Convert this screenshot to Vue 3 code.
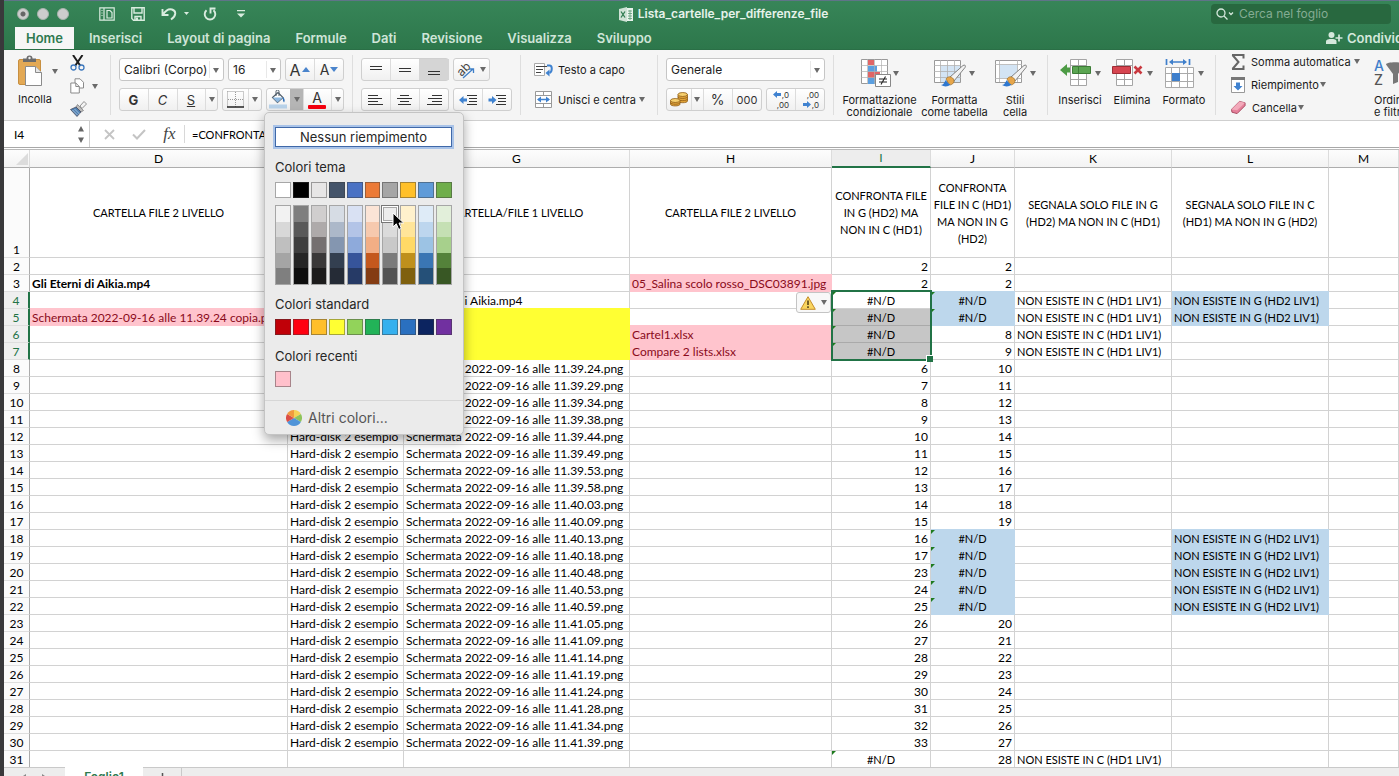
<script setup>
import { ref } from 'vue'

const tabs = ['Home', 'Inserisci', 'Layout di pagina', 'Formule', 'Dati', 'Revisione', 'Visualizza', 'Sviluppo']
const fontName = ref('Calibri (Corpo)')
const fontSize = ref('16')
const numberFormat = ref('Generale')
const cellName = ref('I4')
const formula = ref('=CONFRONTA')
const search = ref('')

const columns = ['D', 'F', 'G', 'H', 'I', 'J', 'K', 'L', 'M']
const headings = {
  D: 'CARTELLA FILE 2 LIVELLO',
  G: 'CARTELLA/FILE 1 LIVELLO',
  H: 'CARTELLA FILE 2 LIVELLO',
  I: 'CONFRONTA FILE\nIN G (HD2) MA\nNON IN C (HD1)',
  J: 'CONFRONTA\nFILE IN C (HD1)\nMA NON IN G\n(HD2)',
  K: 'SEGNALA SOLO FILE IN G\n(HD2) MA NON IN C (HD1)',
  L: 'SEGNALA SOLO FILE IN C\n(HD1) MA NON IN G (HD2)'
}
const times = [
  '39.24', '39.29', '39.34', '39.38', '39.44', '39.49', '39.53', '39.58', '40.03', '40.09', '40.13', '40.18',
  '40.48', '40.53', '40.59', '41.05', '41.09', '41.14', '41.19', '41.24', '41.28', '41.34', '41.39'
]
const inI = [2, 2, '', '', '', '', 6, 7, 8, 9, 10, 11, 12, 13, 14, 15, 16, 17, 23, 24, 25, 26, 27, 28, 29, 30, 31, 32, 33, '']
const inJ = [2, 2, '', '', 8, 9, 10, 11, 12, 13, 14, 15, 16, 17, 18, 19, '', '', '', '', '', 20, 21, 22, 23, 24, 25, 26, 27, 28]

const rows = inI.map((vi, i) => {
  const n = i + 2
  const vj = inJ[i]
  const cells = {}
  for (const c of columns) cells[c] = { text: '', cls: '' }
  cells.I = vi === '' ? { text: '#N/D', cls: 'mid err caps' } : { text: vi, cls: 'num' }
  cells.J = vj === '' ? { text: '#N/D', cls: 'mid err caps blue' } : { text: vj, cls: 'num' }
  if (vi === '') cells.K = { text: 'NON ESISTE IN C (HD1 LIV1)', cls: 'caps' }
  if (vj === '') cells.L = { text: 'NON ESISTE IN G (HD2 LIV1)', cls: 'caps blue' }
  if (n >= 8 && n <= 30) {
    cells.F = { text: 'Hard-disk 2 esempio', cls: '' }
    cells.G = { text: `Schermata 2022-09-16 alle 11.${times[n - 8]}.png`, cls: '' }
  }
  if (n >= 5 && n <= 7) {
    cells.G = { text: '', cls: 'yellow' }
    cells.I.cls += ' picked'
  }
  return { n, cells }
})
const at = n => rows[n - 2].cells
at(3).D = { text: 'Gli Eterni di Aikia.mp4', cls: 'bold' }
at(5).D = { text: 'Schermata 2022-09-16 alle 11.39.24 copia.png', cls: 'pink' }
at(3).H = { text: '05_Salina scolo rosso_DSC03891.jpg', cls: 'pink' }
at(4).G = { text: 'Gli Eterni di Aikia.mp4', cls: '' }
at(6).H = { text: 'Cartel1.xlsx', cls: 'pink' }
at(7).H = { text: 'Compare 2 lists.xlsx', cls: 'pink' }

const theme = ['#ffffff', '#000000', '#e7e6e6', '#44546a', '#4a72c4', '#ec7a36', '#a5a5a5', '#ffc02a', '#5f9bd8', '#6fae4b']
const shades = [
  ['#f2f2f2', '#d8d8d8', '#bfbfbf', '#a5a5a5', '#7f7f7f'],
  ['#7f7f7f', '#595959', '#3f3f3f', '#262626', '#0e0e0e'],
  ['#d0cece', '#aeaaaa', '#757070', '#3a3838', '#1c1b1b'],
  ['#d6dce4', '#acb8c9', '#8496b0', '#333f50', '#252b36'],
  ['#d9e1f3', '#b3c4e7', '#8eaadb', '#36549a', '#263a66'],
  ['#fbe4d6', '#f6c9ae', '#f2ae85', '#c4581d', '#843c13'],
  ['#ededed', '#dbdbdb', '#c9c9c9', '#7b7b7b', '#525252'],
  ['#fff1cc', '#ffe599', '#ffd966', '#bf901c', '#7f600e'],
  ['#deebf7', '#bdd6ee', '#9cc3e4', '#3a76b4', '#255078'],
  ['#e2efda', '#c5e0b4', '#a7d08c', '#54823a', '#385724']
]
const standard = ['#c00008', '#ff0010', '#ffbf2a', '#ffff33', '#92d35a', '#22b358', '#35b0ee', '#2a70c0', '#0c2460', '#7130a0']
</script>

<template>
  <div class="screen">
    <div class="window">
      <header class="top">
        <div class="titlebar">
          <div class="lights">
            <button class="light on" aria-label="Chiudi"></button>
            <button class="light" aria-label="Riduci"></button>
            <button class="light" aria-label="Ingrandisci"></button>
          </div>
          <div class="quick">
            <button aria-label="Nuovo">
              <svg width="16" height="14" viewBox="0 0 16 14"><path d="M.8.8h14.4v12.4H.8zM5 1v12M8 3.500h3l2 2V11H8zM2.500 3.500h1M2.500 6h1M2.500 8.500h1" fill="none" stroke="#d9ecdf" stroke-width="1.200" /></svg>
            </button>
            <button aria-label="Salva">
              <svg width="14" height="14" viewBox="0 0 14 14"><path d="M.8.8h12.4v12.4H2.500L.8 11.500zM3 1v5h8V1M4 13V9.500h6V13" fill="none" stroke="#d9ecdf" stroke-width="1.400" /><path d="M5 10.500h2v3H5z" fill="#d9ecdf" /></svg>
            </button>
            <button aria-label="Annulla" class="undo">
              <svg width="28" height="14" viewBox="0 0 28 14"><path d="M1.500 2v6h6M2 7.500C5 3 8 1.500 11 2.500c4.500 1.500 4.500 6-1 10" fill="none" stroke="#d9ecdf" stroke-width="1.900" /><path d="M23 5h5l-2.500 3z" fill="#d9ecdf" /></svg>
            </button>
            <button aria-label="Ripeti">
              <svg width="14" height="14" viewBox="0 0 14 14"><path d="M3.500 3.200A5.300 5.300 0 1 0 10.500 3.200M7.500 6.500V1.500H12.500" fill="none" stroke="#d9ecdf" stroke-width="1.900" /></svg>
            </button>
            <button aria-label="Personalizza" class="more">
              <svg width="10" height="8" viewBox="0 0 10 8"><path d="M1 0h8v1.300H1zM1 3.500h8L5 7.500z" fill="#d9ecdf" /></svg>
            </button>
          </div>
          <h1 class="doc">
            <svg width="15" height="15" viewBox="0 0 15 15"><path d="M6 1h8v13H6z" fill="#e8f3ec" /><path d="M9 4h4M9 6.500h4M9 9h4M9 11.500h4M11 3v10" stroke="#5a9a76" stroke-width=".8" /><path d="M0 2l8-2v15l-8-2z" fill="#cfe2d6" /><path d="M2 4.500l4 6M6 4.500l-4 6" stroke="#2e7a50" stroke-width="1.300" /></svg>
            Lista_cartelle_per_differenze_file
          </h1>
          <label class="search">
            <svg width="18" height="12" viewBox="0 0 18 12"><circle cx="5" cy="5" r="4" fill="none" stroke="#d5e8dc" stroke-width="1.300" /><path d="M8 8l3.500 3.500M13 4.500l2 2 2-2" fill="none" stroke="#d5e8dc" stroke-width="1.300" /></svg>
            <input v-model="search" type="text" placeholder="Cerca nel foglio" aria-label="Cerca nel foglio" />
          </label>
        </div>
        <nav class="tabs">
          <a v-for="(t, i) in tabs" :key="t" href="#" :class="{ active: i === 0 }">{{ t }}</a>
          <button class="share">
            <svg width="17" height="12" viewBox="0 0 17 12"><circle cx="5.500" cy="3" r="3" fill="#d5e8dc" /><path d="M0 12V9.500C0 7.500 3 7 5.500 7S10.500 7.500 10.500 9.500V12z" fill="#d5e8dc" /><path d="M13 2.500v7M9.500 6h7" stroke="#d5e8dc" stroke-width="1.700" /></svg>
            Condividi
          </button>
        </nav>
      </header>

      <section class="ribbon">
        <div class="group clip">
          <button class="tall paste">
            <span class="pic">
              <svg width="26" height="32" viewBox="0 0 26 32"><rect x="0.500" y="4.500" width="22" height="25" rx="1.500" fill="#e3a955" stroke="#c78f40" /><path d="M5 7V3.500h3.500a3 3 0 0 1 6 0H18V7z" fill="#6b6b6b" /><circle cx="11.500" cy="3" r="1.200" fill="#eee" /><path d="M7.500 11.500h10l6 6v13h-16z" fill="#fff" stroke="#8b8b8b" /><path d="M17.500 11.500v6h6" fill="#e7e7e7" stroke="#8b8b8b" /></svg>
              <i class="arr"></i>
            </span>
            Incolla
          </button>
          <div class="stack">
            <button aria-label="Taglia">
              <svg width="16" height="16" viewBox="0 0 16 16"><path d="M3 0l7.500 11M12.500 0L5 11" stroke="#1d1d1d" stroke-width="2" /><circle cx="3.500" cy="12.500" r="2.500" fill="none" stroke="#3d78bd" stroke-width="1.300" /><circle cx="11.500" cy="12.500" r="2.500" fill="none" stroke="#3d78bd" stroke-width="1.300" /></svg>
            </button>
            <button aria-label="Copia">
              <svg width="16" height="16" viewBox="0 0 16 16"><path d="M5 .8h5l3.500 3.500V10H5z" fill="#fff" stroke="#8a8a8a" /><path d="M.8 5h5L9.300 8.500V15H.8zM5.800 5v3.500h3.500" fill="#fff" stroke="#8a8a8a" /></svg>
              <i class="arr"></i>
            </button>
            <button aria-label="Copia formato">
              <svg width="17" height="16" viewBox="0 0 17 16"><path d="M10 5l4-4.500L16.500 3 12 7.500z" fill="#f3f3f3" stroke="#777" stroke-width=".8" /><path d="M7.500 3.500l6 6-2.500 1.500L6 6z" fill="#bbb" stroke="#777" stroke-width=".7" /><path d="M.5 8.500L6 6l5 5-4 4.500z" fill="#4f7fb0" stroke="#445" stroke-width=".7" /><path d="M2.500 9l5 5M4.500 8l5 5" stroke="#b8cfe6" stroke-width=".8" /></svg>
            </button>
          </div>
        </div>

        <div class="group font">
          <div class="line">
            <span class="combo name"><select v-model="fontName" aria-label="Tipo di carattere"><option>Calibri (Corpo)</option></select><i class="arr"></i></span>
            <span class="combo size"><select v-model="fontSize" aria-label="Dimensione carattere"><option>16</option></select><i class="arr"></i></span>
            <span class="seg">
              <button class="w29 big" aria-label="Aumenta carattere">A<svg width="8" height="5" viewBox="0 0 8 5"><path d="M0 5h8L4 0z" fill="#4a84cc" /></svg></button>
              <button class="w29 big less" aria-label="Riduci carattere">A<svg width="8" height="5" viewBox="0 0 8 5"><path d="M0 0h8L4 5z" fill="#4a84cc" /></svg></button>
            </span>
          </div>
          <div class="line">
            <span class="seg">
              <button class="w29 glyph"><b>G</b></button>
              <button class="w29 glyph"><em>C</em></button>
              <button class="w28 glyph"><u>S</u></button>
              <button class="w12" aria-label="Opzioni sottolineatura"><i class="arr"></i></button>
            </span>
            <span class="seg">
              <button class="w26" aria-label="Bordi">
                <svg width="17" height="17" viewBox="0 0 17 17"><path d="M.5.5h16v15M.5.5v15M8.500 1v15M1 8.500h15" fill="none" stroke="#999" stroke-dasharray="1 1" /><path d="M0 16h17" stroke="#222" stroke-width="1.500" /></svg>
              </button>
              <button class="w13" aria-label="Opzioni bordi"><i class="arr"></i></button>
            </span>
            <span class="seg anchor">
              <button class="w24" aria-label="Colore riempimento">
                <svg width="18" height="19" viewBox="0 0 18 19"><path d="M3.500 7.500L9 2.500l5 5-5.500 5z" fill="#fff" stroke="#4d5a66" stroke-width="1.100" /><path d="M7 6V1.500a1.500 1.500 0 0 1 3 0V6" fill="none" stroke="#4d5a66" /><path d="M3.500 7.500h10.500l-5.500 5z" fill="#8db9e2" /><path d="M14 7c2 2 2 4 1 5.500-1-1-1.500-3-1-5.500z" fill="#2a6cb8" /><path d="M0 14.500h18v4H0z" fill="#b9d3ea" /></svg>
              </button>
              <button class="w13 pressed" aria-label="Opzioni riempimento"><i class="arr"></i></button>
              <button class="w28 letter" aria-label="Colore carattere">A<span class="redbar"></span></button>
              <button class="w12" aria-label="Opzioni colore carattere"><i class="arr"></i></button>

              <div class="palette">
                <button class="nofill">Nessun riempimento</button>
                <h2>Colori tema</h2>
                <div class="swatches">
                  <button v-for="c in theme" :key="c" class="sw" :style="{ background: c }" :aria-label="c"></button>
                </div>
                <div class="swatches shades">
                  <div v-for="(col, i) in shades" :key="i" class="ramp">
                    <button v-for="(c, j) in col" :key="j" :class="{ hover: i === 6 && j === 0 }" :style="{ background: c }" :aria-label="c"></button>
                  </div>
                  <svg class="pointer" width="13" height="19" viewBox="0 0 13 19"><path d="M1 1v14l3.300-3.200L6.700 17.500l2.600-1.100L7 11h4.700z" fill="#000" stroke="#fff" /></svg>
                </div>
                <h2>Colori standard</h2>
                <div class="swatches last">
                  <button v-for="c in standard" :key="c" class="sw" :style="{ background: c }" :aria-label="c"></button>
                </div>
                <h2>Colori recenti</h2>
                <div class="swatches last">
                  <button class="sw recent" aria-label="Rosa"></button>
                </div>
                <button class="others">
                  <svg width="16" height="16" viewBox="-8 -8 16 16"><path d="M0 0V-8A8 8 0 0 1 6.900-4z" fill="#f6d155" /><path d="M0 0L6.900-4A8 8 0 0 1 6.900 4z" fill="#8fc45b" /><path d="M0 0L6.900 4A8 8 0 0 1 0 8z" fill="#4f94d8" /><path d="M0 0V8A8 8 0 0 1-6.900 4z" fill="#4f94d8" /><path d="M0 0L-6.900 4A8 8 0 0 1-6.900-4z" fill="#dc4d45" /><path d="M0 0L-6.900-4A8 8 0 0 1 0-8z" fill="#f09a3e" /></svg>
                  Altri colori...
                </button>
              </div>
            </span>
          </div>
        </div>

        <div class="group align">
          <div class="line">
            <span class="seg">
              <button class="w29" aria-label="Allinea in alto"><svg width="14" height="14" viewBox="0 0 14 14"><path d="M1 3.500h12M1 6.500h12" stroke="#333" /></svg></button>
              <button class="w29" aria-label="Allinea al centro verticale"><svg width="14" height="14" viewBox="0 0 14 14"><path d="M1 5.500h12M1 8.500h12" stroke="#333" /></svg></button>
              <button class="w29 down" aria-label="Allinea in basso"><svg width="14" height="14" viewBox="0 0 14 14"><path d="M1 8.500h12M1 11.500h12" stroke="#333" /></svg></button>
            </span>
            <span class="seg">
              <button class="w36" aria-label="Orientamento">
                <svg width="18" height="18" viewBox="0 0 18 18"><text x="0" y="13" transform="rotate(-45 6 9)" font-family="Inter, sans-serif" font-size="12" fill="#444">ab</text><path d="M6 17L16 8M12 8h4.500v4" fill="none" stroke="#3f7fc8" stroke-width="1.300" /></svg>
                <i class="arr"></i>
              </button>
            </span>
          </div>
          <div class="line">
            <span class="seg">
              <button class="w29" aria-label="Allinea a sinistra"><svg width="15" height="12" viewBox="0 0 15 12"><path d="M0 1.500h10M0 4.500h14M0 7.500h10M0 10.500h15" stroke="#333" /></svg></button>
              <button class="w29" aria-label="Centra"><svg width="15" height="12" viewBox="0 0 15 12"><path d="M3 1.500h9M0 4.500h15M3 7.500h9M1 10.500h13" stroke="#333" /></svg></button>
              <button class="w29" aria-label="Allinea a destra"><svg width="15" height="12" viewBox="0 0 15 12"><path d="M5 1.500h10M1 4.500h14M5 7.500h10M0 10.500h15" stroke="#333" /></svg></button>
            </span>
            <span class="seg">
              <button class="w29" aria-label="Riduci rientro"><svg width="18" height="12" viewBox="0 0 18 12"><path d="M8 1.500h10M10 4.500h8M10 7.500h8M8 10.500h10" stroke="#333" /><path d="M0 6l4.500-4v2.500H8v3H4.500V10z" fill="#3f82d0" /></svg></button>
              <button class="w29" aria-label="Aumenta rientro"><svg width="18" height="12" viewBox="0 0 18 12"><path d="M8 1.500h10M10 4.500h8M10 7.500h8M8 10.500h10" stroke="#333" /><path d="M8.500 6L4 2v2.500H.5v3H4V10z" fill="#3f82d0" /></svg></button>
            </span>
          </div>
        </div>

        <div class="group wrap">
          <button class="row">
            <svg width="20" height="14" viewBox="0 0 20 14"><path d="M.5.5h10v12H.5z" fill="#fff" stroke="#aaa" /><path d="M2 3.500h11M2 6.500h7M2 9.500h5" stroke="#444" /><path d="M13 2.500h2.500c3 0 3 6 0 7.500" fill="none" stroke="#3f82d0" stroke-width="2" /><path d="M11.500 10L15.500 6.500v7z" fill="#3f82d0" /></svg>
            Testo a capo
          </button>
          <button class="row">
            <svg width="17" height="17" viewBox="0 0 17 17" class="mg"><path d="M.5.5h16v16H.5zM.5 4.500h16M.5 12.500h16M8.500.5v4M8.500 12.500v4" fill="#fff" stroke="#999" /><path d="M3 8.500h11" stroke="#3f82d0" stroke-width="1.500" /><path d="M2 8.500l4-3v6zM15 8.500l-4-3v6z" fill="#3f82d0" /></svg>
            Unisci e centra <i class="arr"></i>
          </button>
        </div>

        <div class="group number">
          <div class="line">
            <span class="combo general"><select v-model="numberFormat" aria-label="Formato numero"><option>Generale</option></select><i class="arr"></i></span>
          </div>
          <div class="line">
            <span class="seg">
              <button class="w25" aria-label="Valuta">
                <svg width="18" height="15" viewBox="0 0 18 15"><g fill="#e4a63a" stroke="#8f5d17" stroke-width=".8"><path d="M8 2.500v6.500c0 2.300 9.500 2.300 9.500 0V2.500z" /><ellipse cx="12.700" cy="2.500" rx="4.700" ry="2" fill="#f6cf6e" /><path d="M8 4.700c0 2.300 9.500 2.300 9.500 0M8 6.900c0 2.300 9.500 2.300 9.500 0" fill="none" /><path d="M.5 8.500v3.700c0 2.300 9.500 2.300 9.500 0V8.500z" /><ellipse cx="5.200" cy="8.500" rx="4.700" ry="2" fill="#f6cf6e" /><path d="M.5 10.500c0 2.300 9.500 2.300 9.500 0" fill="none" /></g></svg>
              </button>
              <button class="w12" aria-label="Opzioni valuta"><i class="arr"></i></button>
              <button class="w29 pct">%</button>
              <button class="w29 mil">000</button>
            </span>
            <span class="seg">
              <button class="w29 dec" aria-label="Aumenta decimali"><span><svg width="8" height="7" viewBox="0 0 8 7"><path d="M0 3.500L4 0v2h4v3H4v2z" fill="#3f82d0" /></svg>,0</span><span>,00</span></button>
              <button class="w29 dec" aria-label="Riduci decimali"><span>,00</span><span><svg width="8" height="7" viewBox="0 0 8 7"><path d="M8 3.500L4 0v2H0v3h4v2z" fill="#3f82d0" /></svg>,0</span></button>
            </span>
          </div>
        </div>

        <div class="group styles">
          <button class="tall cond">
            <span class="pic">
              <svg width="30" height="28" viewBox="0 0 30 28"><path d="M.5.500h26v24H.500z" fill="#fff" stroke="#999" /><path d="M7 1h6v5H7zM7 13h12v6H7z" fill="#e06667" /><path d="M7 7h9v6H7zM7 19h7v6H7z" fill="#5b9fe0" /><path d="M0 6.500h27M0 12.500h27M0 18.500h27M6.500 0v25M13.500 0v25M20.500 0v25" stroke="#b0b0b0" stroke-width=".7" /><path d="M14.500 15.500h15v12h-15z" fill="#fff" stroke="#888" /><path d="M18 20h8M18 23h8M24.500 17.500l-4.500 8" stroke="#222" stroke-width="1.100" /></svg>
              <i class="arr"></i>
            </span>
            Formattazione<br />condizionale
          </button>
          <button class="tall tab">
            <span class="pic">
              <svg width="33" height="28" viewBox="0 0 33 28"><path d="M.5 1.500h26v22H.500z" fill="#fff" stroke="#999" /><path d="M7 7h19v16H7z" fill="#d3e4f4" /><path d="M0 6.500h27M0 12.500h27M0 18.500h27M6.500 1v22M13.500 1v22M20.500 1v22" stroke="#b0b0b0" stroke-width=".8" /><path d="M16 18L29 6.500c2-1 3 0 2 2L20 22z" fill="#f2f2f2" stroke="#777" stroke-width=".9" /><path d="M12 20c2-3 5-3 7.500 0 1.500 3-1 6-4 6z" fill="#e7a64a" stroke="#98702f" stroke-width=".7" /><path d="M7 26c3 0 3-3 5-5 1 2 2 4 4.500 4.500C14 28 10 28 7 26z" fill="#2f78d0" /></svg>
              <i class="arr"></i>
            </span>
            Formatta<br />come tabella
          </button>
          <button class="tall cell">
            <span class="pic">
              <svg width="33" height="28" viewBox="0 0 33 28"><path d="M.5 1.500h26v22H.500z" fill="#fff" stroke="#999" /><path d="M5 6h17v13H5z" fill="#d3e4f4" /><path d="M0 5.500h27M0 19.500h27M4.500 1v22M22.500 1v22" stroke="#b0b0b0" stroke-width=".8" /><path d="M16 18L29 6.500c2-1 3 0 2 2L20 22z" fill="#f2f2f2" stroke="#777" stroke-width=".9" /><path d="M12 20c2-3 5-3 7.500 0 1.500 3-1 6-4 6z" fill="#e7a64a" stroke="#98702f" stroke-width=".7" /><path d="M7 26c3 0 3-3 5-5 1 2 2 4 4.500 4.500C14 28 10 28 7 26z" fill="#2f78d0" /></svg>
              <i class="arr"></i>
            </span>
            Stili<br />cella
          </button>
        </div>

        <div class="group cells">
          <button class="tall">
            <span class="pic">
              <svg width="32" height="28" viewBox="0 0 32 28"><path d="M10.500.5h16v26h-16zM10.500 6.500h16M10.500 20.500h16M18.500.5v26" fill="#fff" stroke="#a5a5a5" /><path d="M12.500 7.500h18v7h-18z" fill="#5ba552" stroke="#3d7d37" /><path d="M0 11l7-6v3.500h3v5H7V17z" fill="#4d9b45" /><path d="M18.500 8v6" stroke="#3d7d37" /></svg>
              <i class="arr"></i>
            </span>
            Inserisci
          </button>
          <button class="tall">
            <span class="pic">
              <svg width="32" height="28" viewBox="0 0 32 28"><path d="M4.500.5h16v26h-16zM4.500 6.500h16M4.500 20.500h16M12.500.5v26" fill="#fff" stroke="#a5a5a5" /><path d="M.5 7.500h18v7H.5z" fill="#d64550" stroke="#9e2c35" /><path d="M22.500 7.500l7 7M29.500 7.500l-7 7" stroke="#c9383f" stroke-width="2.600" /></svg>
              <i class="arr"></i>
            </span>
            Elimina
          </button>
          <button class="tall">
            <span class="pic">
              <svg width="30" height="29" viewBox="0 0 30 29"><path d="M.5 8.500h28v20H.5zM.500 14.500h28M.5 22.500h28M6.500 8.500v20M14.500 8.500v20M22.500 8.500v20" fill="#fff" stroke="#aaa" /><path d="M7 14h8v8H7z" fill="#3f7fcb" /><path d="M1.500 0v6M24.500 0v6M7 3h12" stroke="#3f7fcb" stroke-width="1.700" /><path d="M4 3l4-3v6zM22 3l-4-3v6z" fill="#3f7fcb" /></svg>
              <i class="arr"></i>
            </span>
            Formato
          </button>
        </div>

        <div class="group edit">
          <button class="row"><svg width="14" height="16" viewBox="0 0 14 16"><path d="M1 1h11.500v3.500M1.500 1l6 7-6 7M1 15h11.500v-3.500" fill="none" stroke="#666" stroke-width="2" /></svg>Somma automatica <i class="arr"></i></button>
          <button class="row"><svg width="14" height="16" viewBox="0 0 14 16"><path d="M.5.5h13v15H.5z" fill="#fff" stroke="#999" /><path d="M0 0h14v3H0z" fill="#777" /><path d="M7 13.500L2.500 9H5V5.500h4V9h2.500z" fill="#3f82d0" /></svg>Riempimento <i class="arr"></i></button>
          <button class="row"><svg width="15" height="15" viewBox="0 0 16 15"><path d="M.5 9.500L9 1l6 1.500v3L6.500 14 1 12.500z" fill="#e5809a" stroke="#a5485f" /><path d="M9 1l6 1.500L6.500 10.500l-6-1z" fill="#f3aabb" /></svg>Cancella <i class="arr"></i></button>
        </div>

        <div class="group sort">
          <button class="tall">
            <span class="pic">
              <svg width="40" height="28" viewBox="0 0 40 28"><text x="0" y="12" font-family="Inter, sans-serif" font-size="14" font-weight="500" fill="#3f7fcb">A</text><text x="0" y="26" font-family="Inter, sans-serif" font-size="14" font-weight="500" fill="#555">Z</text><path d="M12 5.500c0-3 18-3 18 0L24 15v8l-5 2V15z" fill="#777" /></svg>
            </span>
            Ordina<br />e filtra
          </button>
        </div>
      </section>

      <section class="formula">
        <div class="namebox">
          <input v-model="cellName" type="text" aria-label="Casella nome" />
          <button aria-label="Elenco nomi"><svg width="8" height="19" viewBox="0 0 8 19"><path d="M1 6.500h6L4 1zM1 12.500h6l-3 5.500z" fill="#666" /></svg></button>
        </div>
        <button aria-label="Annulla modifica" class="x"><svg width="11" height="11" viewBox="0 0 11 11"><path d="M1 1l9 9M10 1l-9 9" stroke="#c4c4c4" stroke-width="1.800" /></svg></button>
        <button aria-label="Conferma" class="v"><svg width="14" height="11" viewBox="0 0 14 11"><path d="M1 5.500L5 9.500 13 1" fill="none" stroke="#c4c4c4" stroke-width="2" /></svg></button>
        <button class="fx"><i>fx</i></button>
        <input v-model="formula" class="entry" type="text" aria-label="Barra della formula" />
      </section>

      <table class="sheet">
        <colgroup>
          <col class="c-n" />
          <col v-for="c in columns" :key="c" :class="'c-' + c" />
        </colgroup>
        <thead>
          <tr>
            <th class="corner"><svg width="12" height="12" viewBox="0 0 12 12"><path d="M12 0v12H0z" fill="#dcdcdc" /></svg></th>
            <th v-for="c in columns" :key="c" scope="col" :class="{ sel: c === 'I' }">{{ c }}</th>
          </tr>
        </thead>
        <tbody>
          <tr class="first">
            <th scope="row">1</th>
            <td v-for="c in columns" :key="c">{{ headings[c] }}</td>
          </tr>
          <tr v-for="r in rows" :key="r.n">
            <th scope="row" :class="{ sel: r.n > 3 && r.n < 8 }">{{ r.n }}</th>
            <td v-for="c in columns" :key="c" :class="r.cells[c].cls">
              <template v-if="r.n === 4 && c === 'H'">
                <button class="warn" aria-label="Controllo errori">
                  <svg width="16" height="14" viewBox="0 0 16 14"><path d="M8 .7L15.300 13.300H.7z" fill="#f9d55f" stroke="#c58d2a" stroke-linejoin="round" /><path d="M8 4.500v4.500M8 10.300v1.700" stroke="#4b3a12" stroke-width="1.500" /></svg>
                  <i class="arr"></i>
                </button>
              </template>
              <template v-else>{{ r.cells[c].text }}</template>
              <span v-if="r.n === 4 && c === 'I'" class="range"></span>
            </td>
          </tr>
        </tbody>
      </table>

      <footer class="sheets">
        <div class="nav">
          <button aria-label="Foglio precedente"><svg width="6" height="8" viewBox="0 0 6 8"><path d="M6 0v8L0 4z" fill="#888" /></svg></button>
          <button aria-label="Foglio successivo"><svg width="6" height="8" viewBox="0 0 6 8"><path d="M0 0v8l6-4z" fill="#888" /></svg></button>
        </div>
        <a href="#" class="current">Foglio1</a>
        <button class="plus" aria-label="Nuovo foglio"><svg width="9" height="9" viewBox="0 0 9 9"><path d="M4.500 0v9M0 4.500h9" stroke="#555" stroke-width="1.500" /></svg></button>
      </footer>
    </div>
  </div>
</template>

<style>
body { background: #39393b; }
</style>

<style scoped>
* { box-sizing: border-box; }
button { border: 0; padding: 0; margin: 0; background: none; font: inherit; color: inherit; }
svg { display: block; flex: none; }
.screen { height: 100vh; overflow: hidden; padding-left: 4px; background: #39393b; font-family: Inter, Roboto, sans-serif; font-size: 11px; color: #1a1a1a; }
.window { display: flex; flex-direction: column; background: #fff; }
.arr { flex: none; width: 0; height: 0; border: 3px solid transparent; border-top: 5px solid #6a6a6a; border-bottom: 0; }

.top { height: 50px; flex: none; border-top: 1px solid #5f7488; border-bottom: 1px solid #2a6f46; background: linear-gradient(#378558, #2d774b); color: #d5e8dc; }
.titlebar { display: flex; align-items: center; height: 26px; position: relative; }
.lights { display: flex; gap: 8px; padding-left: 13px; width: 95px; }
.light { width: 12px; height: 12px; border-radius: 50%; background: #cdcdcd; border: 1px solid #a9b3ad; }
.light.on { background: radial-gradient(circle, #666 0 2px, #cdcdcd 3px); }
.quick { display: flex; align-items: center; gap: 16px; }
.quick .undo { margin-right: -2px; }
.more { margin-left: 3px; }
.doc { position: absolute; left: 0; right: 0; top: 5px; margin: 0 auto; width: max-content; padding-left: 44px; display: flex; align-items: center; gap: 4px; font-size: 12px; line-height: 16px; font-weight: 600; color: #e6f2ea; }
.search { display: flex; align-items: center; gap: 5px; margin-left: auto; margin-right: 8px; width: 180px; height: 20px; padding-left: 5px; border-radius: 4px; background: #28683f; }
.search input { flex: 1; min-width: 0; border: 0; padding: 0; background: none; font: 12px/16px Inter, sans-serif; color: #d5e8dc; outline: 0; }
.search input::placeholder { color: #84ac93; opacity: 1; }
.tabs { display: flex; align-items: center; gap: 25px; height: 22px; padding-left: 11px; font-size: 13px; font-weight: 600; }
.tabs a { color: #cfe5d8; text-decoration: none; line-height: 22px; white-space: nowrap; }
.tabs a.active { padding: 0 11px; margin-right: -10px; background: #f6f6f6; color: #2f7a50; }
.share { display: flex; align-items: center; gap: 4px; width: 73px; margin-left: auto; overflow: hidden; white-space: nowrap; }

.ribbon { display: flex; height: 71px; flex: none; background: #f5f5f5; border-bottom: 1px solid #cfcfcf; }
.group { position: relative; flex: none; padding: 8px 0 0 8px; display: flex; flex-direction: column; gap: 7px; }
.group:not(.sort):not(.edit)::after { content: ''; position: absolute; right: 0; top: 5px; height: 60px; width: 1px; background: #dedede; }
.line { display: flex; gap: 4px; height: 23px; }
.seg { display: flex; height: 23px; border: 1px solid #cfcfcf; border-radius: 3px; background: linear-gradient(#fff, #f0f0f0); }
.seg > button { display: flex; align-items: center; justify-content: center; gap: 5px; margin: 0 -1px 0 0; border-right: 1px solid #dcdcdc; color: #333; }
.seg > button:first-child { margin-left: -1px; }
.seg > button:last-of-type { border-right: 0; }
.w12 { width: 13px; } .w13 { width: 14px; } .w24 { width: 25px; } .w25 { width: 26px; } .w26 { width: 27px; }
.w28 { width: 29px; } .w29 { width: 30px; } .w36 { width: 37px; }
.combo { position: relative; display: flex; align-items: center; height: 23px; border: 1px solid #c6c6c6; border-radius: 3px; background: #fff; }
.combo select { appearance: none; width: 100%; height: 100%; border: 0; padding: 0 15px 0 4px; background: none; font: 12px Inter, sans-serif; color: #222; outline: 0; }
.combo .arr { position: absolute; right: 4px; top: 9px; }
.combo::after { content: ''; position: absolute; right: 13px; top: 2px; bottom: 2px; width: 1px; background: #e8e8e8; }
.name { width: 105px; } .size { width: 53px; } .general { width: 159px; }

.clip { width: 107px; flex-direction: row; gap: 12px; padding: 5px 0 0 14px; }
.tall { display: flex; flex-direction: column; align-items: center; line-height: 12px; white-space: nowrap; text-align: center; }
.pic { display: flex; align-items: center; height: 32px; gap: 6px; margin-bottom: 6px; }
.paste { align-items: flex-start; }
.clip .pic { gap: 8px; }
.stack { display: flex; flex-direction: column; gap: 7px; }
.stack button { display: flex; align-items: center; gap: 6px; height: 16px; }
.font { width: 242px; }
.big { font-size: 16px; align-items: center; }
.seg > .big { gap: 1px; }
.seg > .less { font-size: 14px; }
.glyph { font-size: 13px; }
.glyph b { font-weight: 700; }
.glyph em, .glyph u { font-weight: 400; }
.seg > .pressed { background: #b5b5b5; }
.seg > .down { background: #d5d5d5; }
.seg > .letter { flex-direction: column; gap: 0; font-size: 14px; line-height: 14px; }
.redbar { width: 18px; height: 4px; background: #f5000f; border-radius: 1px; }
.anchor { position: relative; }
.align { width: 168px; }
.wrap { width: 137px; padding-left: 13px; }
.row { display: flex; align-items: center; gap: 4px; height: 23px; white-space: nowrap; }
.row .arr { margin-left: -1px; }
.mg { margin: 0 2px 0 1px; }
.number { width: 176px; }
.pct { font-size: 14px; }
.mil { font-size: 11px; }
.seg > .dec { flex-direction: column; align-items: flex-end; gap: 0; padding-right: 6px; font-size: 8px; line-height: 10px; }
.dec span { display: flex; align-items: center; gap: 1px; }
.styles { width: 214px; flex-direction: row; gap: 0; }
.styles .pic, .cells .pic, .sort .pic { height: 30px; margin-bottom: 6px; }
.styles .pic { gap: 2px; }
.cond { width: 75px; } .tab { width: 75px; } .cell { width: 46px; }
.cells { width: 168px; flex-direction: row; gap: 6px; padding-left: 9px; }
.cells .tall { width: 46px; }
.cells .pic { gap: 3px; }
.edit { width: 158px; padding: 0 0 0 15px; gap: 0; }
.edit .row { gap: 6px; height: 23px; }
.edit .arr { margin-left: -5px; }
.edit .row:first-child .arr { margin-left: -3px; }
.sort { flex: 1; min-width: 0; overflow: hidden; padding-left: 0; }
.sort .tall { align-items: flex-start; text-align: left; }

.palette { position: absolute; z-index: 10; left: -3px; top: 23px; width: 200px; padding: 14px 11px 0 10px; background: #ebebeb; border: 1px solid #c4c4c4; border-radius: 5px; box-shadow: 0 5px 12px rgba(0, 0, 0, .35); color: #262626; }
.palette h2 { margin: 0; font-size: 13px; font-weight: 400; line-height: 16px; }
.nofill { display: block; width: 100%; height: 20px; margin-bottom: 12px; background: #fff; border: 1px solid #3f68a8; box-shadow: 0 0 0 2px #a9c3e8; font-size: 13px; line-height: 18px; }
.swatches { position: relative; display: flex; gap: 2px; margin: 7px 0 14px; }
.shades { margin: -7px 0 11px; }
.swatches.last { margin-bottom: 13px; }
.sw { width: 16px; height: 16px; border: 1px solid rgba(60, 60, 60, .45); }
.ramp { display: flex; flex-direction: column; width: 16px; height: 80px; border: 1px solid rgba(110, 110, 110, .55); }
.ramp button { flex: 1; }
.ramp .hover { position: relative; margin: 0 -1px; outline: 1px solid #777; box-shadow: inset 0 0 0 1px #fff, inset 0 0 0 2px #a8a8a8; }
.pointer { position: absolute; left: 117px; top: 7px; }
.recent { background: #ffc0cb; }
.others { display: flex; align-items: center; gap: 6px; width: calc(100% + 21px); height: 34px; margin: 0 -11px 0 -10px; border-top: 1px solid #d6d6d6; font-size: 14px; color: #555; }
.palette .others { padding-left: 21px; }

.formula { display: flex; align-items: center; height: 27px; flex: none; background: #fff; border-bottom: 1px solid #a8a8a8; }
.namebox { display: flex; align-items: center; width: 86px; height: 26px; padding: 0 4px 0 10px; border-right: 1px solid #cfcfcf; }
.namebox input, .entry { flex: 1; min-width: 0; border: 0; padding: 0; font: 12px Lato, sans-serif; color: #000; outline: 0; background: none; }
.formula .entry { font-size: 11px; }
.x { margin-left: 14px; } .v { margin-left: 17px; }
.formula .fx { width: 27px; margin: 0 7px 0 12px; padding-right: 3px; border-right: 1px solid #d8d8d8; font: 17px/18px "Liberation Serif", serif; text-align: center; color: #444; }

.sheet { width: 100%; table-layout: fixed; border-collapse: separate; border-spacing: 0; margin-top: 1px; border-top: 1px solid #b9b9b9; font: 12px/14px Lato, Carlito, sans-serif; color: #000; }
.c-n { width: 26px; } .c-D { width: 258px; } .c-F { width: 116px; } .c-G { width: 226px; } .c-H { width: 202px; }
.c-I { width: 99px; } .c-J { width: 84px; } .c-K { width: 157px; } .c-L { width: 157px; } .c-M { width: 70px; }
th { padding: 0; font-weight: 400; background: #fbfbfb; }
thead th { height: 18px; border-bottom: 1px solid #adadad; border-right: 1px solid #dcdcdc; background: linear-gradient(#fdfdfd, #f3f3f3); }
thead th.sel { border-bottom: 2px solid #217346; color: #217346; background: #ededed; }
.corner svg { margin-left: 12px; }
tbody th { height: 17px; padding-top: 2px; border-right: 1px solid #ababab; border-bottom: 1px solid #dedede; vertical-align: bottom; }
tbody th.sel { color: #217346; background: #efefef; border-right: 2px solid #217346; }
td { position: relative; height: 17px; padding: 2px 2px 0; border-right: 1px solid #d2d2d2; border-bottom: 1px solid #d2d2d2; white-space: nowrap; overflow: hidden; }
.first td { height: 90px; padding-top: 0; white-space: pre; font-size: 11px; line-height: 17px; text-align: center; }
.caps { font-size: 11px; }
.bold { font-weight: 700; }
.num { text-align: right; }
.mid { text-align: center; overflow: visible; }
.pink { background: #ffc4cd; color: #8a0a1a; border-color: #ffc4cd; box-shadow: 0 -1px #ffc4cd; }
.blue { background: #bdd7ec; border-color: #bdd7ec; box-shadow: 0 -1px #bdd7ec; }
.yellow { background: #ffff33; border-color: #ffff33; box-shadow: 0 -1px #ffff33; }
.picked { background: #c6c6c6; border-bottom-color: #aaa; }
.err::before { content: ''; position: absolute; left: 0; top: 0; border: 2px solid transparent; border-left-color: #1d7a1d; border-top-color: #1d7a1d; }
.range { position: absolute; z-index: 2; left: -1px; top: -2px; width: 101px; height: 71px; border: 2px solid #217346; }
.range::after { content: ''; position: absolute; right: -3px; bottom: -3px; width: 6px; height: 6px; background: #217346; border: 1px solid #fff; border-right: 0; border-bottom: 0; }
td:has(.warn) { overflow: visible; }
.warn { position: absolute; z-index: 3; right: 0; top: 0; display: flex; align-items: center; gap: 5px; width: 35px; height: 21px; padding-left: 3px; background: #f8f8f8; border: 1px solid #c4c4c4; border-radius: 3px; }

.sheets { display: flex; height: 24px; flex: none; margin-top: -1px; position: relative; background: #ededed; border-top: 1px solid #c9c9c9; }
.nav { display: flex; gap: 16px; width: 61px; padding: 6px 0 0 16px; align-items: flex-start; }
.current { width: 78px; margin-top: -1px; background: #fff; color: #2f7a50; font-weight: 600; text-align: center; text-decoration: none; font-size: 12px; line-height: 20px; }
.plus { display: flex; justify-content: center; width: 39px; padding-top: 5px; border-right: 1px solid #c9c9c9; }
</style>
